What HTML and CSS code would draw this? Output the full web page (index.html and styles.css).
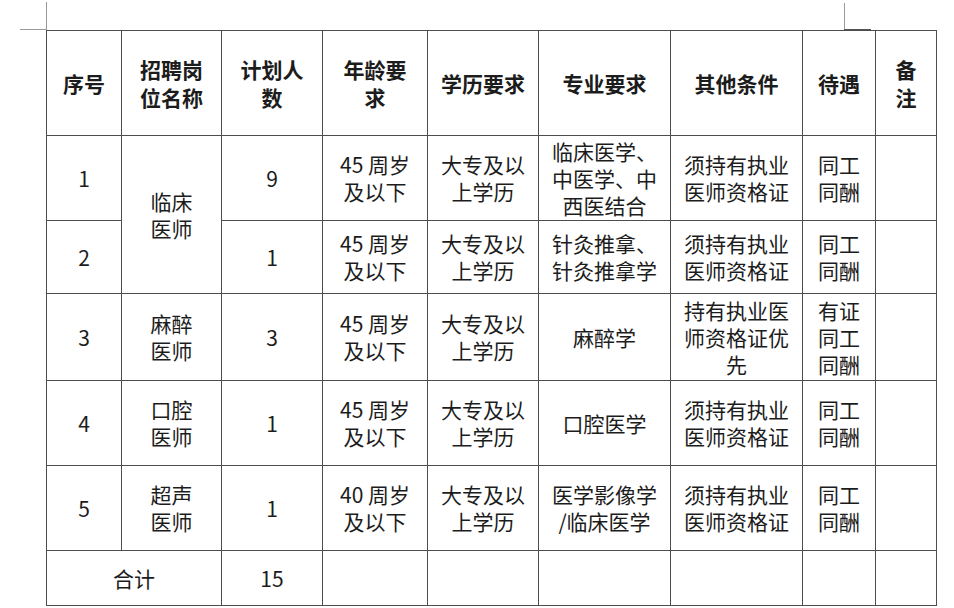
FILE: index.html
```html
<!DOCTYPE html>
<html lang="zh-CN">
<head>
<meta charset="utf-8">
<title>招聘岗位表</title>
<link rel="stylesheet" href="styles.css">
</head>
<body>
<div class="page">
  <span class="mark mark-tl-v"></span>
  <span class="mark mark-tl-h"></span>
  <span class="mark mark-tr-v"></span>
  <span class="mark mark-tr-h"></span>
  <table class="jobs">
    <colgroup>
      <col class="c1"><col class="c2"><col class="c3"><col class="c4"><col class="c5">
      <col class="c6"><col class="c7"><col class="c8"><col class="c9">
    </colgroup>
    <thead>
      <tr class="r-head">
        <th>序号</th>
        <th>招聘岗<br>位名称</th>
        <th>计划人<br>数</th>
        <th>年龄要<br>求</th>
        <th>学历要求</th>
        <th>专业要求</th>
        <th>其他条件</th>
        <th>待遇</th>
        <th>备<br>注</th>
      </tr>
    </thead>
    <tbody>
      <tr class="r1">
        <td>1</td>
        <td rowspan="2">临床<br>医师</td>
        <td>9</td>
        <td>45 周岁<br>及以下</td>
        <td>大专及以<br>上学历</td>
        <td>临床医学、<br>中医学、中<br>西医结合</td>
        <td>须持有执业<br>医师资格证</td>
        <td>同工<br>同酬</td>
        <td></td>
      </tr>
      <tr class="r2">
        <td>2</td>
        <td>1</td>
        <td>45 周岁<br>及以下</td>
        <td>大专及以<br>上学历</td>
        <td>针灸推拿、<br>针灸推拿学</td>
        <td>须持有执业<br>医师资格证</td>
        <td>同工<br>同酬</td>
        <td></td>
      </tr>
      <tr class="r3">
        <td>3</td>
        <td>麻醉<br>医师</td>
        <td>3</td>
        <td>45 周岁<br>及以下</td>
        <td>大专及以<br>上学历</td>
        <td>麻醉学</td>
        <td>持有执业医<br>师资格证优<br>先</td>
        <td>有证<br>同工<br>同酬</td>
        <td></td>
      </tr>
      <tr class="r4">
        <td>4</td>
        <td>口腔<br>医师</td>
        <td>1</td>
        <td>45 周岁<br>及以下</td>
        <td>大专及以<br>上学历</td>
        <td>口腔医学</td>
        <td>须持有执业<br>医师资格证</td>
        <td>同工<br>同酬</td>
        <td></td>
      </tr>
      <tr class="r5">
        <td>5</td>
        <td>超声<br>医师</td>
        <td>1</td>
        <td>40 周岁<br>及以下</td>
        <td>大专及以<br>上学历</td>
        <td>医学影像学<br>/临床医学</td>
        <td>须持有执业<br>医师资格证</td>
        <td>同工<br>同酬</td>
        <td></td>
      </tr>
      <tr class="r-total">
        <td colspan="2">合计</td>
        <td>15</td>
        <td></td>
        <td></td>
        <td></td>
        <td></td>
        <td></td>
        <td></td>
      </tr>
    </tbody>
  </table>
</div>
</body>
</html>
```

FILE: styles.css
```css
html, body {
  margin: 0;
  padding: 0;
  background: #ffffff;
}

.page {
  position: relative;
  width: 954px;
  height: 608px;
  padding: 30px 0 0 46px;
  box-sizing: border-box;
  font-family: "Noto Sans CJK SC", "Noto Sans", sans-serif;
  color: #1c1c1c;
}

.mark {
  position: absolute;
  background: #9a9a9a;
}
.mark-tl-v { left: 46px; top: 2px; width: 1px; height: 28px; }
.mark-tl-h { left: 20px; top: 29px; width: 26px; height: 1px; }
.mark-tr-v { left: 844px; top: 3px; width: 1px; height: 27px; }
.mark-tr-h { left: 844px; top: 29px; width: 27px; height: 1px; background: #555; }

.jobs {
  border-collapse: collapse;
  table-layout: fixed;
  width: 890px;
}

.jobs th,
.jobs td {
  border: 1px solid #4d4d4d;
  padding: 0;
  text-align: center;
  vertical-align: middle;
  font-size: 21px;
  line-height: 27px;
}

.jobs th {
  font-weight: 700;
  line-height: 28px;
}

.jobs td {
  font-weight: 400;
}

.c1 { width: 75px; }
.c2 { width: 100px; }
.c3 { width: 101px; }
.c4 { width: 105px; }
.c5 { width: 111px; }
.c6 { width: 132px; }
.c7 { width: 132px; }
.c8 { width: 73px; }
.c9 { width: 61px; }

.r-head { height: 105px; }
.r1 { height: 85px; }
.r2 { height: 73px; }
.r3 { height: 87px; }
.r4 { height: 85px; }
.r5 { height: 85px; }
.r-total { height: 55px; }
```
